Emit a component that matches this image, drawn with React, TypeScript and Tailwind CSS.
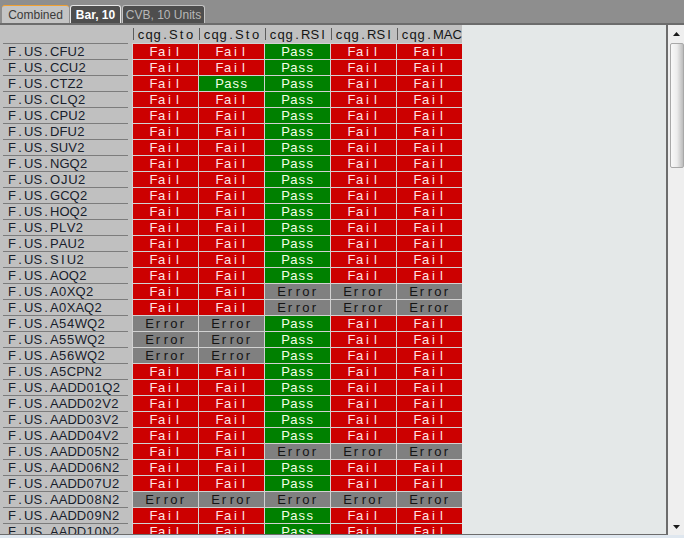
import React from 'react';

type Status = 'F' | 'P' | 'E';

const columns = ['cqg.Sto', 'cqg.Sto', 'cqg.RSI', 'cqg.RSI', 'cqg.MAC'];

// symbol name + result of each study column
const rows: [string, string][] = [
  ['F.US.CFU2', 'FFPFF'],
  ['F.US.CCU2', 'FFPFF'],
  ['F.US.CTZ2', 'FPPFF'],
  ['F.US.CLQ2', 'FFPFF'],
  ['F.US.CPU2', 'FFPFF'],
  ['F.US.DFU2', 'FFPFF'],
  ['F.US.SUV2', 'FFPFF'],
  ['F.US.NGQ2', 'FFPFF'],
  ['F.US.OJU2', 'FFPFF'],
  ['F.US.GCQ2', 'FFPFF'],
  ['F.US.HOQ2', 'FFPFF'],
  ['F.US.PLV2', 'FFPFF'],
  ['F.US.PAU2', 'FFPFF'],
  ['F.US.SIU2', 'FFPFF'],
  ['F.US.AOQ2', 'FFPFF'],
  ['F.US.A0XQ2', 'FFEEE'],
  ['F.US.A0XAQ2', 'FFEEE'],
  ['F.US.A54WQ2', 'EEPFF'],
  ['F.US.A55WQ2', 'EEPFF'],
  ['F.US.A56WQ2', 'EEPFF'],
  ['F.US.A5CPN2', 'FFPFF'],
  ['F.US.AADD01Q2', 'FFPFF'],
  ['F.US.AADD02V2', 'FFPFF'],
  ['F.US.AADD03V2', 'FFPFF'],
  ['F.US.AADD04V2', 'FFPFF'],
  ['F.US.AADD05N2', 'FFEEE'],
  ['F.US.AADD06N2', 'FFPFF'],
  ['F.US.AADD07U2', 'FFPFF'],
  ['F.US.AADD08N2', 'EEEEE'],
  ['F.US.AADD09N2', 'FFPFF'],
  ['F.US.AADD10N2', 'FFPFF'],
];

const cellStyle: Record<Status, { cls: string; label: string }> = {
  F: { cls: 'bg-[#cc0000] text-[#ffe4e4]', label: 'Fail' },
  P: { cls: 'bg-[#008000] text-[#f4ffe6]', label: 'Pass' },
  E: { cls: 'bg-[#808080] text-[#141414]', label: 'Error' },
};

// the grid draws every character in an 8px slot, wide letters take their own width
const Spaced: React.FC<{ text: string }> = ({ text }) => (
  <>
    {text.split('').map((c, i) => (
      <span key={i} className="inline-block min-w-2 text-center">
        {c}
      </span>
    ))}
  </>
);

const Tabs = () => (
  <div className="h-[23px] flex items-end pl-[2px] gap-px font-['Liberation_Sans',Arial,sans-serif] text-[12px]">
    <div className="h-[18px] w-[67px] flex items-center justify-center rounded-t-[3px] bg-[#c4c4c4] border-t border-[#f0a030] text-[#3a3a3a]">
      Combined
    </div>
    <div className="h-[18px] w-[51px] flex items-center justify-center rounded-t-[3px] bg-[#4e4e4e] border border-b-0 border-[#e6e6e6] text-white font-bold">
      Bar, 10
    </div>
    <div className="h-[18px] w-[83px] flex items-center justify-center rounded-t-[3px] bg-[#4e4e4e] border border-b-0 border-[#c4c4c4] text-[#b8b8b8]">
      CVB, 10 Units
    </div>
  </div>
);

const Scrollbar = () => (
  <div className="w-[16px] bg-[#efefef] flex flex-col items-center">
    <div className="h-[18px] w-full flex items-center justify-center">
      <svg width="7" height="4" viewBox="0 0 7 4">
        <path d="M3.5 0 L7 4 L0 4 Z" fill="#1a1a1a" />
      </svg>
    </div>
    <div className="h-[125px] w-[14px] ml-[2px] rounded-[2px] border border-[#a8a8a8] bg-linear-to-r from-[#f8f8f8] via-[#ececec] to-[#bcbcbc]" />
    <div className="flex-1" />
    <div className="h-[16px] w-full flex items-center justify-center">
      <svg width="7" height="4" viewBox="0 0 7 4">
        <path d="M0 0 L7 0 L3.5 4 Z" fill="#1a1a1a" />
      </svg>
    </div>
  </div>
);

const Grid = () => (
  <div className="font-['Liberation_Sans',Arial,sans-serif] text-[13px] leading-[15px]">
    {/* header */}
    <div className="flex h-[18px]">
      <div className="w-[132px] bg-[#c0c0c0]" />
      {columns.map((c, i) => (
        <div key={i} className="w-[66px] bg-[#c0c0c0] flex items-center text-[#141414] whitespace-nowrap">
          <span className="w-px h-[12px] bg-[#5c5c5c] ml-px shrink-0" />
          <span className="ml-[3px] pt-px">
            <Spaced text={c} />
          </span>
        </div>
      ))}
    </div>
    {rows.map(([name, res]) => (
      <div key={name} className="flex h-[16px]">
        <div className="w-[132px] h-full bg-[#c0c0c0] pl-[3px] pr-[4px]">
          <div className="h-full border-t border-[#7c7c7c] pl-[5px] text-[#18202c] whitespace-nowrap">
            <Spaced text={name} />
          </div>
        </div>
        {res.split('').map((s, i) => {
          const st = cellStyle[s as Status];
          return (
            <div
              key={i}
              className={`w-[66px] h-full border-t border-l border-[#d2d2d2] text-center ${st.cls}`}
            >
              <Spaced text={st.label} />
            </div>
          );
        })}
      </div>
    ))}
  </div>
);

export default function App() {
  return (
    <div className="w-[684px] h-[538px] bg-[#8e8e8e] flex flex-col overflow-hidden">
      <Tabs />
      <div className="flex-1 min-h-0 flex border-t-2 border-[#6c6c6c]">
        <div className="flex-1 bg-[#e4e8e8] border-r-2 border-b border-[#6c6c6c] overflow-hidden">
          <Grid />
        </div>
        <Scrollbar />
      </div>
      <div className="h-[3px] bg-[#dfe7ef]" />
    </div>
  );
}
